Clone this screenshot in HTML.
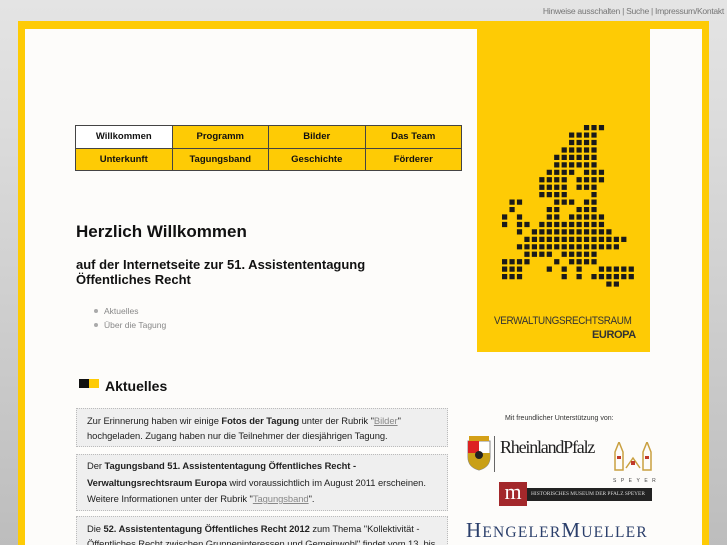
<!DOCTYPE html>
<html><head><meta charset="utf-8"><style>
*{margin:0;padding:0;box-sizing:border-box}
html{width:727px;height:545px;overflow:hidden}
body{width:727px;height:545px;overflow:hidden;position:relative;font-family:"Liberation Sans",sans-serif;background:linear-gradient(#e4e4e4 0,#dcdcdc 120px,#cfcfcf 300px,#bdbdbd 545px)}
.top{position:absolute;right:3px;top:6px;font-size:8.6px;color:#777;letter-spacing:-.3px}
.frame{position:absolute;left:18px;top:21px;width:691px;height:524px;background:#fecb05}
.inner{position:absolute;left:25px;top:29px;width:677px;height:516px;background:#fdfcfa}
.panel{position:absolute;left:477px;top:29px;width:173px;height:323px;background:#fecb05}
table{position:absolute;left:75px;top:125px;width:387px;height:46px;border-collapse:collapse}
td{border:1px solid #444;background:#fecb05;text-align:center;font-size:9.5px;font-weight:bold;width:25%;height:22px;color:#111}
td.w{background:#fff}
h1{position:absolute;left:76px;top:222px;font-size:17px;font-weight:bold;color:#111}
h2{position:absolute;left:76px;top:257px;font-size:13px;font-weight:bold;line-height:15px;color:#111}
ul{position:absolute;left:104px;top:304px;font-size:8.5px;color:#888;list-style:none;line-height:14px}
ul li:before{content:"";position:absolute;left:-10px;margin-top:5px;width:4px;height:4px;border-radius:50%;background:#aaa}
.ak{position:absolute;left:79px;top:379px}
.ak i{position:absolute;top:0;width:10px;height:9px}
.ak b{position:absolute;left:26px;top:-1px;font-size:14px;white-space:nowrap;color:#111}
.box{position:absolute;left:76px;width:372px;background:#efefef;border:1px dotted #bbb;font-size:9.4px;line-height:15px;color:#222;padding:5px 6px 5px 10px;letter-spacing:-.05px;overflow:hidden}
.box a{color:#888;text-decoration:underline}
.sp{position:absolute;left:505px;top:415px;font-size:7px;color:#333}
</style></head><body>
<div class="top">Hinweise ausschalten | Suche | Impressum/Kontakt</div>
<div class="frame"></div>
<div class="inner"></div>
<div class="panel"></div>
<svg style="position:absolute;left:502px;top:125px" width="140" height="170" viewBox="0 0 140 170">
<g transform="scale(7.45)" fill="#1a1a1a">
<path d="M11 0h.7v.7h-.7zM12 0h.7v.7h-.7zM13 0h.7v.7h-.7z
M9 1h.7v.7h-.7zM10 1h.7v.7h-.7zM11 1h.7v.7h-.7zM12 1h.7v.7h-.7z
M9 2h.7v.7h-.7zM10 2h.7v.7h-.7zM11 2h.7v.7h-.7zM12 2h.7v.7h-.7z
M8 3h.7v.7h-.7zM9 3h.7v.7h-.7zM10 3h.7v.7h-.7zM11 3h.7v.7h-.7zM12 3h.7v.7h-.7z
M7 4h.7v.7h-.7zM8 4h.7v.7h-.7zM9 4h.7v.7h-.7zM10 4h.7v.7h-.7zM11 4h.7v.7h-.7zM12 4h.7v.7h-.7z
M7 5h.7v.7h-.7zM8 5h.7v.7h-.7zM9 5h.7v.7h-.7zM10 5h.7v.7h-.7zM11 5h.7v.7h-.7zM12 5h.7v.7h-.7z
M6 6h.7v.7h-.7zM7 6h.7v.7h-.7zM8 6h.7v.7h-.7zM9 6h.7v.7h-.7zM11 6h.7v.7h-.7zM12 6h.7v.7h-.7zM13 6h.7v.7h-.7z
M5 7h.7v.7h-.7zM6 7h.7v.7h-.7zM7 7h.7v.7h-.7zM8 7h.7v.7h-.7zM10 7h.7v.7h-.7zM11 7h.7v.7h-.7zM12 7h.7v.7h-.7zM13 7h.7v.7h-.7z
M5 8h.7v.7h-.7zM6 8h.7v.7h-.7zM7 8h.7v.7h-.7zM8 8h.7v.7h-.7zM10 8h.7v.7h-.7zM11 8h.7v.7h-.7zM12 8h.7v.7h-.7z
M5 9h.7v.7h-.7zM6 9h.7v.7h-.7zM7 9h.7v.7h-.7zM8 9h.7v.7h-.7zM12 9h.7v.7h-.7z
M1 10h.7v.7h-.7zM2 10h.7v.7h-.7zM7 10h.7v.7h-.7zM8 10h.7v.7h-.7zM9 10h.7v.7h-.7zM11 10h.7v.7h-.7zM12 10h.7v.7h-.7z
M1 11h.7v.7h-.7zM6 11h.7v.7h-.7zM7 11h.7v.7h-.7zM10 11h.7v.7h-.7zM11 11h.7v.7h-.7zM12 11h.7v.7h-.7z
M0 12h.7v.7h-.7zM2 12h.7v.7h-.7zM6 12h.7v.7h-.7zM7 12h.7v.7h-.7zM9 12h.7v.7h-.7zM10 12h.7v.7h-.7zM11 12h.7v.7h-.7zM12 12h.7v.7h-.7zM13 12h.7v.7h-.7z
M0 13h.7v.7h-.7zM2 13h.7v.7h-.7zM3 13h.7v.7h-.7zM5 13h.7v.7h-.7zM6 13h.7v.7h-.7zM7 13h.7v.7h-.7zM8 13h.7v.7h-.7zM9 13h.7v.7h-.7zM10 13h.7v.7h-.7zM11 13h.7v.7h-.7zM12 13h.7v.7h-.7zM13 13h.7v.7h-.7z
M2 14h.7v.7h-.7zM4 14h.7v.7h-.7zM5 14h.7v.7h-.7zM6 14h.7v.7h-.7zM7 14h.7v.7h-.7zM8 14h.7v.7h-.7zM9 14h.7v.7h-.7zM10 14h.7v.7h-.7zM11 14h.7v.7h-.7zM12 14h.7v.7h-.7zM13 14h.7v.7h-.7zM14 14h.7v.7h-.7z
M3 15h.7v.7h-.7zM4 15h.7v.7h-.7zM5 15h.7v.7h-.7zM6 15h.7v.7h-.7zM7 15h.7v.7h-.7zM8 15h.7v.7h-.7zM9 15h.7v.7h-.7zM10 15h.7v.7h-.7zM11 15h.7v.7h-.7zM12 15h.7v.7h-.7zM13 15h.7v.7h-.7zM14 15h.7v.7h-.7zM15 15h.7v.7h-.7zM16 15h.7v.7h-.7z
M2 16h.7v.7h-.7zM3 16h.7v.7h-.7zM4 16h.7v.7h-.7zM5 16h.7v.7h-.7zM6 16h.7v.7h-.7zM7 16h.7v.7h-.7zM8 16h.7v.7h-.7zM9 16h.7v.7h-.7zM10 16h.7v.7h-.7zM11 16h.7v.7h-.7zM12 16h.7v.7h-.7zM13 16h.7v.7h-.7zM14 16h.7v.7h-.7zM15 16h.7v.7h-.7z
M3 17h.7v.7h-.7zM4 17h.7v.7h-.7zM5 17h.7v.7h-.7zM6 17h.7v.7h-.7zM8 17h.7v.7h-.7zM9 17h.7v.7h-.7zM10 17h.7v.7h-.7zM11 17h.7v.7h-.7zM12 17h.7v.7h-.7z
M0 18h.7v.7h-.7zM1 18h.7v.7h-.7zM2 18h.7v.7h-.7zM3 18h.7v.7h-.7zM7 18h.7v.7h-.7zM9 18h.7v.7h-.7zM10 18h.7v.7h-.7zM11 18h.7v.7h-.7zM12 18h.7v.7h-.7z
M0 19h.7v.7h-.7zM1 19h.7v.7h-.7zM2 19h.7v.7h-.7zM6 19h.7v.7h-.7zM8 19h.7v.7h-.7zM10 19h.7v.7h-.7zM13 19h.7v.7h-.7zM14 19h.7v.7h-.7zM15 19h.7v.7h-.7zM16 19h.7v.7h-.7zM17 19h.7v.7h-.7z
M0 20h.7v.7h-.7zM1 20h.7v.7h-.7zM2 20h.7v.7h-.7zM8 20h.7v.7h-.7zM10 20h.7v.7h-.7zM12 20h.7v.7h-.7zM13 20h.7v.7h-.7zM14 20h.7v.7h-.7zM15 20h.7v.7h-.7zM16 20h.7v.7h-.7zM17 20h.7v.7h-.7z
M14 21h.7v.7h-.7zM15 21h.7v.7h-.7z"/>
</g></svg>
<div style="position:absolute;left:494px;top:315px;font-size:11px;color:#333;letter-spacing:-.4px;transform:scaleX(.9);transform-origin:left">VERWALTUNGSRECHTSRAUM</div>
<div style="position:absolute;left:592px;top:329px;font-size:11px;font-weight:bold;color:#333;letter-spacing:-.4px">EUROPA</div>
<table>
<tr><td class="w">Willkommen</td><td>Programm</td><td>Bilder</td><td>Das Team</td></tr>
<tr><td>Unterkunft</td><td>Tagungsband</td><td>Geschichte</td><td>Förderer</td></tr>
</table>
<h1>Herzlich Willkommen</h1>
<h2>auf der Internetseite zur 51. Assistententagung<br>Öffentliches Recht</h2>
<ul><li>Aktuelles</li><li>Über die Tagung</li></ul>
<div class="ak"><i style="left:0;background:#111"></i><i style="left:10px;background:#fecb05"></i><b>Aktuelles</b></div>
<div class="box" style="top:408px;height:39px;padding-top:4px">Zur Erinnerung haben wir einige <b>Fotos der Tagung</b> unter der Rubrik "<a>Bilder</a>" hochgeladen. Zugang haben nur die Teilnehmer der diesjährigen Tagung.</div>
<div class="box" style="top:454px;height:57px;padding-top:3px;line-height:16.5px">Der <b>Tagungsband 51. Assistententagung Öffentliches Recht -<br>Verwaltungsrechtsraum Europa</b> wird voraussichtlich im August 2011 erscheinen.<br>Weitere Informationen unter der Rubrik "<a>Tagungsband</a>".</div>
<div class="box" style="top:516px;height:40px;padding-top:4px;white-space:nowrap">Die <b>52. Assistententagung Öffentliches Recht 2012</b> zum Thema "Kollektivität -<br>Öffentliches Recht zwischen Gruppeninteressen und Gemeinwohl" findet vom 13. bis</div>
<div class="sp">Mit freundlicher Unterstützung von:</div>
<svg style="position:absolute;left:467px;top:435px" width="24" height="36"><path d="M1 6h22v16q0 10-11 13q-11-3-11-13z" fill="#fff" stroke="#888"/><path d="M1 6h11v12h-11z" fill="#d22"/><path d="M12 18h11v4q0 10-11 13q-11-3-11-13v-4z" fill="#c9a017"/><circle cx="12" cy="20" r="4" fill="#222"/><path d="M2 1h20v5h-20z" fill="#d4a017"/></svg>
<div style="position:absolute;left:494px;top:436px;width:1px;height:36px;background:#666"></div>
<div style="position:absolute;left:500px;top:437px;font-family:'Liberation Serif',serif;font-size:18px;letter-spacing:-1.2px;color:#222">RheinlandPfalz</div>
<svg style="position:absolute;left:612px;top:442px" width="42" height="34"><g fill="none" stroke="#c9a040" stroke-width="1.5"><path d="M7 0l-4 10v18h8v-18z"/><path d="M35 0l-4 10v18h8v-18z"/><path d="M14 26l7-10 7 10"/></g><g fill="#c0392b"><rect x="5" y="14" width="4" height="3"/><rect x="33" y="14" width="4" height="3"/><rect x="19" y="19" width="4" height="4"/></g></svg>
<div style="position:absolute;left:613px;top:478px;font-size:5px;letter-spacing:4.5px;color:#444">SPEYER</div>
<div style="position:absolute;left:499px;top:482px;width:28px;height:24px;background:#a3282b;color:#fff;font-family:'Liberation Serif',serif;font-size:22px;line-height:20px;text-align:center">m</div>
<div style="position:absolute;left:527px;top:488px;width:125px;height:13px;background:#222;color:#ddd;font-family:'Liberation Serif',serif;font-size:5.4px;line-height:13px;padding-left:4px;white-space:nowrap;overflow:hidden">HISTORISCHES MUSEUM DER PFALZ SPEYER</div>
<div style="position:absolute;left:466px;top:518px;font-family:'Liberation Serif',serif;font-size:21px;color:#2b3f6b;letter-spacing:1.2px;white-space:nowrap">H<span style="font-size:15.5px">ENGELER</span>M<span style="font-size:15.5px">UELLER</span></div>
</body></html>
